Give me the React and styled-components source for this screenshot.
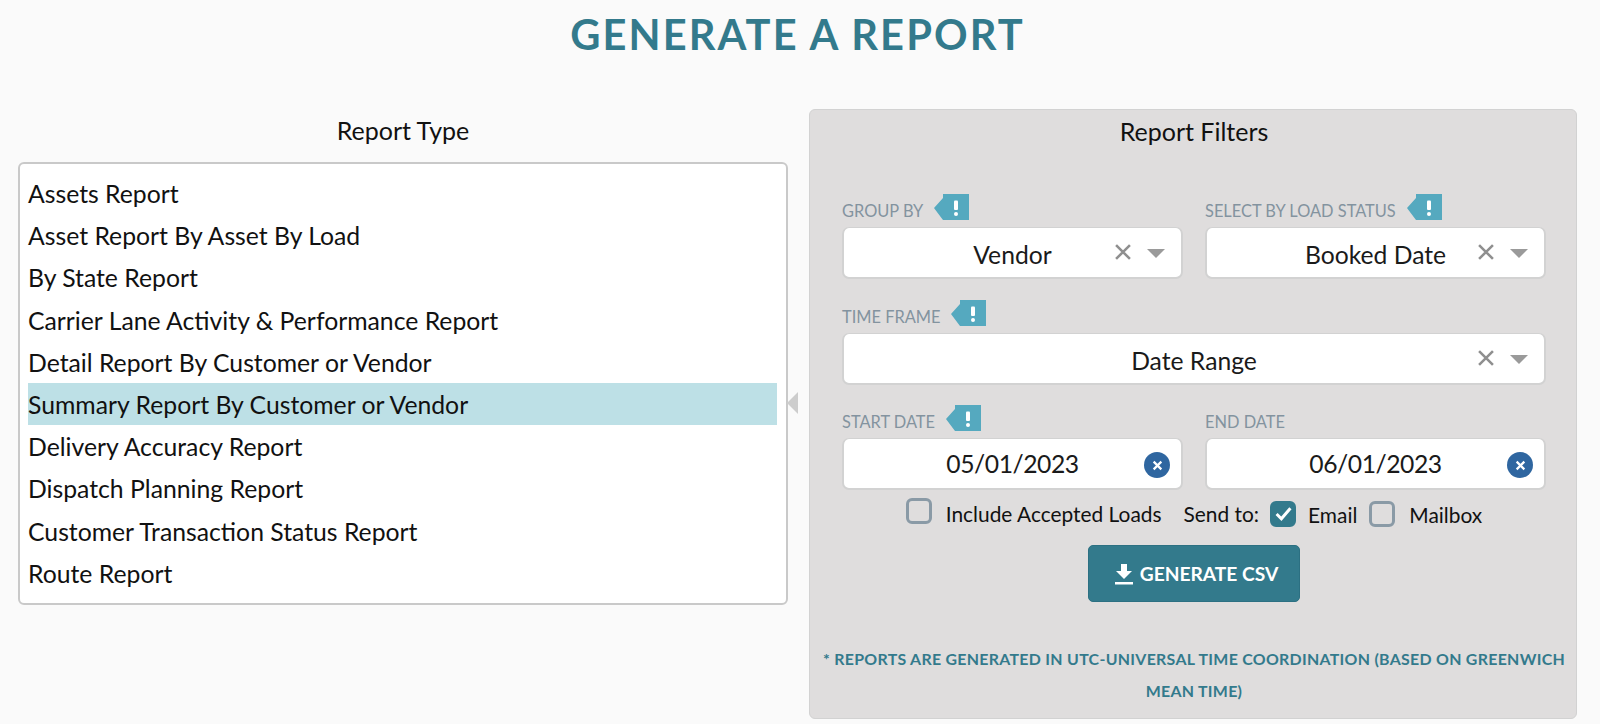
import React from "react";
import styled, { createGlobalStyle } from "styled-components";

const Global = createGlobalStyle`
  html, body { margin: 0; padding: 0; background: #fafafa; }
  body { font-family: Lato, "Open Sans", sans-serif; color: #1a1a1a; }
`;
const Page = styled.div`
  width: 1600px; height: 724px; overflow: hidden; box-sizing: border-box; padding: 0 23px 0 18px;
`;
const Title = styled.h1`
  margin: 0; height: 109px; padding-top: 10px; box-sizing: border-box;
  text-align: center; font-size: 41.6px; line-height: 48px; font-weight: 700; letter-spacing: 2.1px; color: #337a8c;
`;
const Columns = styled.div`
  display: flex; gap: 21px; align-items: flex-start;
`;
const Left = styled.section`
  width: 770px; flex: none;
`;
const ColumnTitle = styled.h2`
  margin: 0; text-align: center; font-size: 25px; font-weight: 400; line-height: 30px; color: #111;
`;
const LeftTitle = styled(ColumnTitle)`
  padding-top: 6px; height: 53px; box-sizing: border-box;
`;
const ListBox = styled.ul`
  position: relative; list-style: none; margin: 0; box-sizing: border-box; height: 443px; padding: 8px 9px 0 8px;
  background: #fff; border: 2px solid #c9c9c9; border-radius: 6px;
`;
const Item = styled.li`
  height: 42.2px; box-sizing: border-box; padding-top: 1px; line-height: 42.2px; font-size: 24.75px; color: #111; white-space: nowrap;
  background: ${p => (p.$active ? "#bde0e6" : "transparent")};
`;
const Pointer = styled.span`
  position: absolute; right: -12px; top: 228px; width: 0; height: 0;
  border-style: solid; border-width: 11.5px 11px 11.5px 0; border-color: transparent #cdcdcd transparent transparent;
`;
const Panel = styled.section`
  width: 768px; height: 610px; flex: none; box-sizing: border-box; padding: 6px 30px 0 32px;
  background: #dfdddd; border: 1px solid #d2d2d2; border-radius: 6px;
`;
const FilterTitle = styled(ColumnTitle)`
  height: 78px;
`;
const Row = styled.div`
  display: flex; gap: 22px; margin-bottom: ${p => p.$mb || 0}px;
`;
const Field = styled.div`
  flex: 1; min-width: 0;
`;
const LabelRow = styled.div`
  display: flex; align-items: flex-start; height: 33px;
`;
const Label = styled.label`
  font-size: 16.4px; line-height: 33px; color: #83939f; text-transform: uppercase;
`;
const Hint = styled.svg`
  width: 35px; height: 26px; flex: none; margin-left: 11px;
`;
const Control = styled.div`
  position: relative; height: 52px; box-sizing: border-box; display: flex; align-items: center; justify-content: center;
  background: #fff; border: 2px solid #d2d2d2; border-top-width: 1px; border-radius: 7px;
  font-size: 24.7px; color: #1a1a1a; padding-top: ${p => (p.$date ? 0 : 3)}px;
  letter-spacing: ${p => (p.$date ? "-0.45px" : "normal")};
`;
const Clear = styled.svg`
  position: absolute; right: 50px; top: 16px; width: 16px; height: 16px;
`;
const Caret = styled.span`
  position: absolute; right: 16px; top: 21px; width: 0; height: 0;
  border-style: solid; border-width: 9px 9px 0 9px; border-color: #9a9a9a transparent transparent transparent;
`;
const DateClear = styled.span`
  position: absolute; right: 11px; top: 13px; width: 26px; height: 26px; border-radius: 50%;
  background: #2f66a0; display: flex; align-items: center; justify-content: center;
`;
const Options = styled.div`
  display: flex; align-items: center; justify-content: center; height: 47px; padding-right: 0; font-size: 20.9px; color: #111;
`;
const CheckBox = styled.span`
  width: 26px; height: 26px; box-sizing: border-box; border-radius: 6px; flex: none;
  border: 3.5px solid ${p => (p.$on ? "#337a8c" : "#8a9aa6")};
  background: ${p => (p.$on ? "#337a8c" : "transparent")};
  display: flex; align-items: center; justify-content: center;
  margin: ${p => p.$up || 0}px ${p => p.$gap || 14}px 0 0;
`;
const OptionText = styled.span`
  margin-right: ${p => p.$mr || 0}px; margin-top: ${p => p.$mt || 0}px; white-space: nowrap;
`;
const ButtonRow = styled.div`
  display: flex; justify-content: center; margin-top: 8px;
`;
const GenerateButton = styled.button`
  width: 212px; height: 57px; display: flex; align-items: center; justify-content: center; gap: 6px;
  border: 1px solid #2c7082; border-radius: 5px; background: #337a8c; color: #fff;
  font-family: inherit; font-size: 19.2px; font-weight: 700; padding: 0 0 0 4px;
`;
const Note = styled.p`
  margin: 41px -25px 0 -25px; text-align: center; font-size: 15.9px; line-height: 31.6px; font-weight: 700;
  letter-spacing: .3px; color: #337a8c; text-transform: uppercase;
`;

const reports = [
  "Assets Report", "Asset Report By Asset By Load", "By State Report",
  "Carrier Lane Activity & Performance Report", "Detail Report By Customer or Vendor",
  "Summary Report By Customer or Vendor", "Delivery Accuracy Report", "Dispatch Planning Report",
  "Customer Transaction Status Report", "Route Report",
];

const HintIcon = () => (
  <Hint viewBox="0 0 35 26">
    <path d="M0 14 L9 4 V0 H35 V26 H9 Z" fill="#55a9bf" />
    <rect x="20" y="6.5" width="4" height="9.5" rx="1" fill="#fff" />
    <circle cx="22" cy="20" r="2" fill="#fff" />
  </Hint>
);
const SelectField = ({ label, value }) => (
  <Field>
    <LabelRow><Label>{label}</Label><HintIcon /></LabelRow>
    <Control>
      {value}
      <Clear viewBox="0 0 15 15"><path d="M1 1 L14 14 M14 1 L1 14" stroke="#8f8f8f" strokeWidth="2.4" /></Clear>
      <Caret />
    </Control>
  </Field>
);
const DateField = ({ label, value, hint }) => (
  <Field>
    <LabelRow><Label>{label}</Label>{hint && <HintIcon />}</LabelRow>
    <Control $date>
      {value}
      <DateClear>
        <svg width="11" height="11" viewBox="0 0 10 10"><path d="M1.5 1.5 L8.5 8.5 M8.5 1.5 L1.5 8.5" stroke="#fff" strokeWidth="2" /></svg>
      </DateClear>
    </Control>
  </Field>
);

export default function App() {
  return (
    <Page>
      <Global />
      <Title>GENERATE A REPORT</Title>
      <Columns>
        <Left>
          <LeftTitle>Report Type</LeftTitle>
          <ListBox>
            {reports.map(r => <Item key={r} $active={r.startsWith("Summary")}>{r}</Item>)}
            <Pointer />
          </ListBox>
        </Left>
        <Panel>
          <FilterTitle>Report Filters</FilterTitle>
          <Row $mb={21}>
            <SelectField label="Group By" value="Vendor" />
            <SelectField label="Select By Load Status" value="Booked Date" />
          </Row>
          <Row $mb={20}><SelectField label="Time Frame" value="Date Range" /></Row>
          <Row>
            <DateField label="Start Date" value="05/01/2023" hint />
            <DateField label="End Date" value="06/01/2023" />
          </Row>
          <Options>
            <CheckBox $up={-5} />
            <OptionText $mr={22}>Include Accepted Loads</OptionText>
            <OptionText $mr={11}>Send to:</OptionText>
            <CheckBox $on $gap={12}>
              <svg width="17" height="15" viewBox="0 0 16 14"><path d="M1.5 7.5 L6 12 L14.5 2" fill="none" stroke="#fff" strokeWidth="2.8" /></svg>
            </CheckBox>
            <OptionText $mt={2} $mr={12}>Email</OptionText>
            <CheckBox $gap={14} />
            <OptionText $mt={2}>Mailbox</OptionText>
          </Options>
          <ButtonRow>
            <GenerateButton>
              <svg width="20" height="22" viewBox="0 0 20 22"><path d="M7 1 H13 V8 H18 L10 16 L2 8 H7 Z M1 19 H19 V21.5 H1 Z" fill="#fff" /></svg>
              GENERATE CSV
            </GenerateButton>
          </ButtonRow>
          <Note>* Reports are generated in UTC-Universal Time Coordination (based on Greenwich Mean Time)</Note>
        </Panel>
      </Columns>
    </Page>
  );
}
